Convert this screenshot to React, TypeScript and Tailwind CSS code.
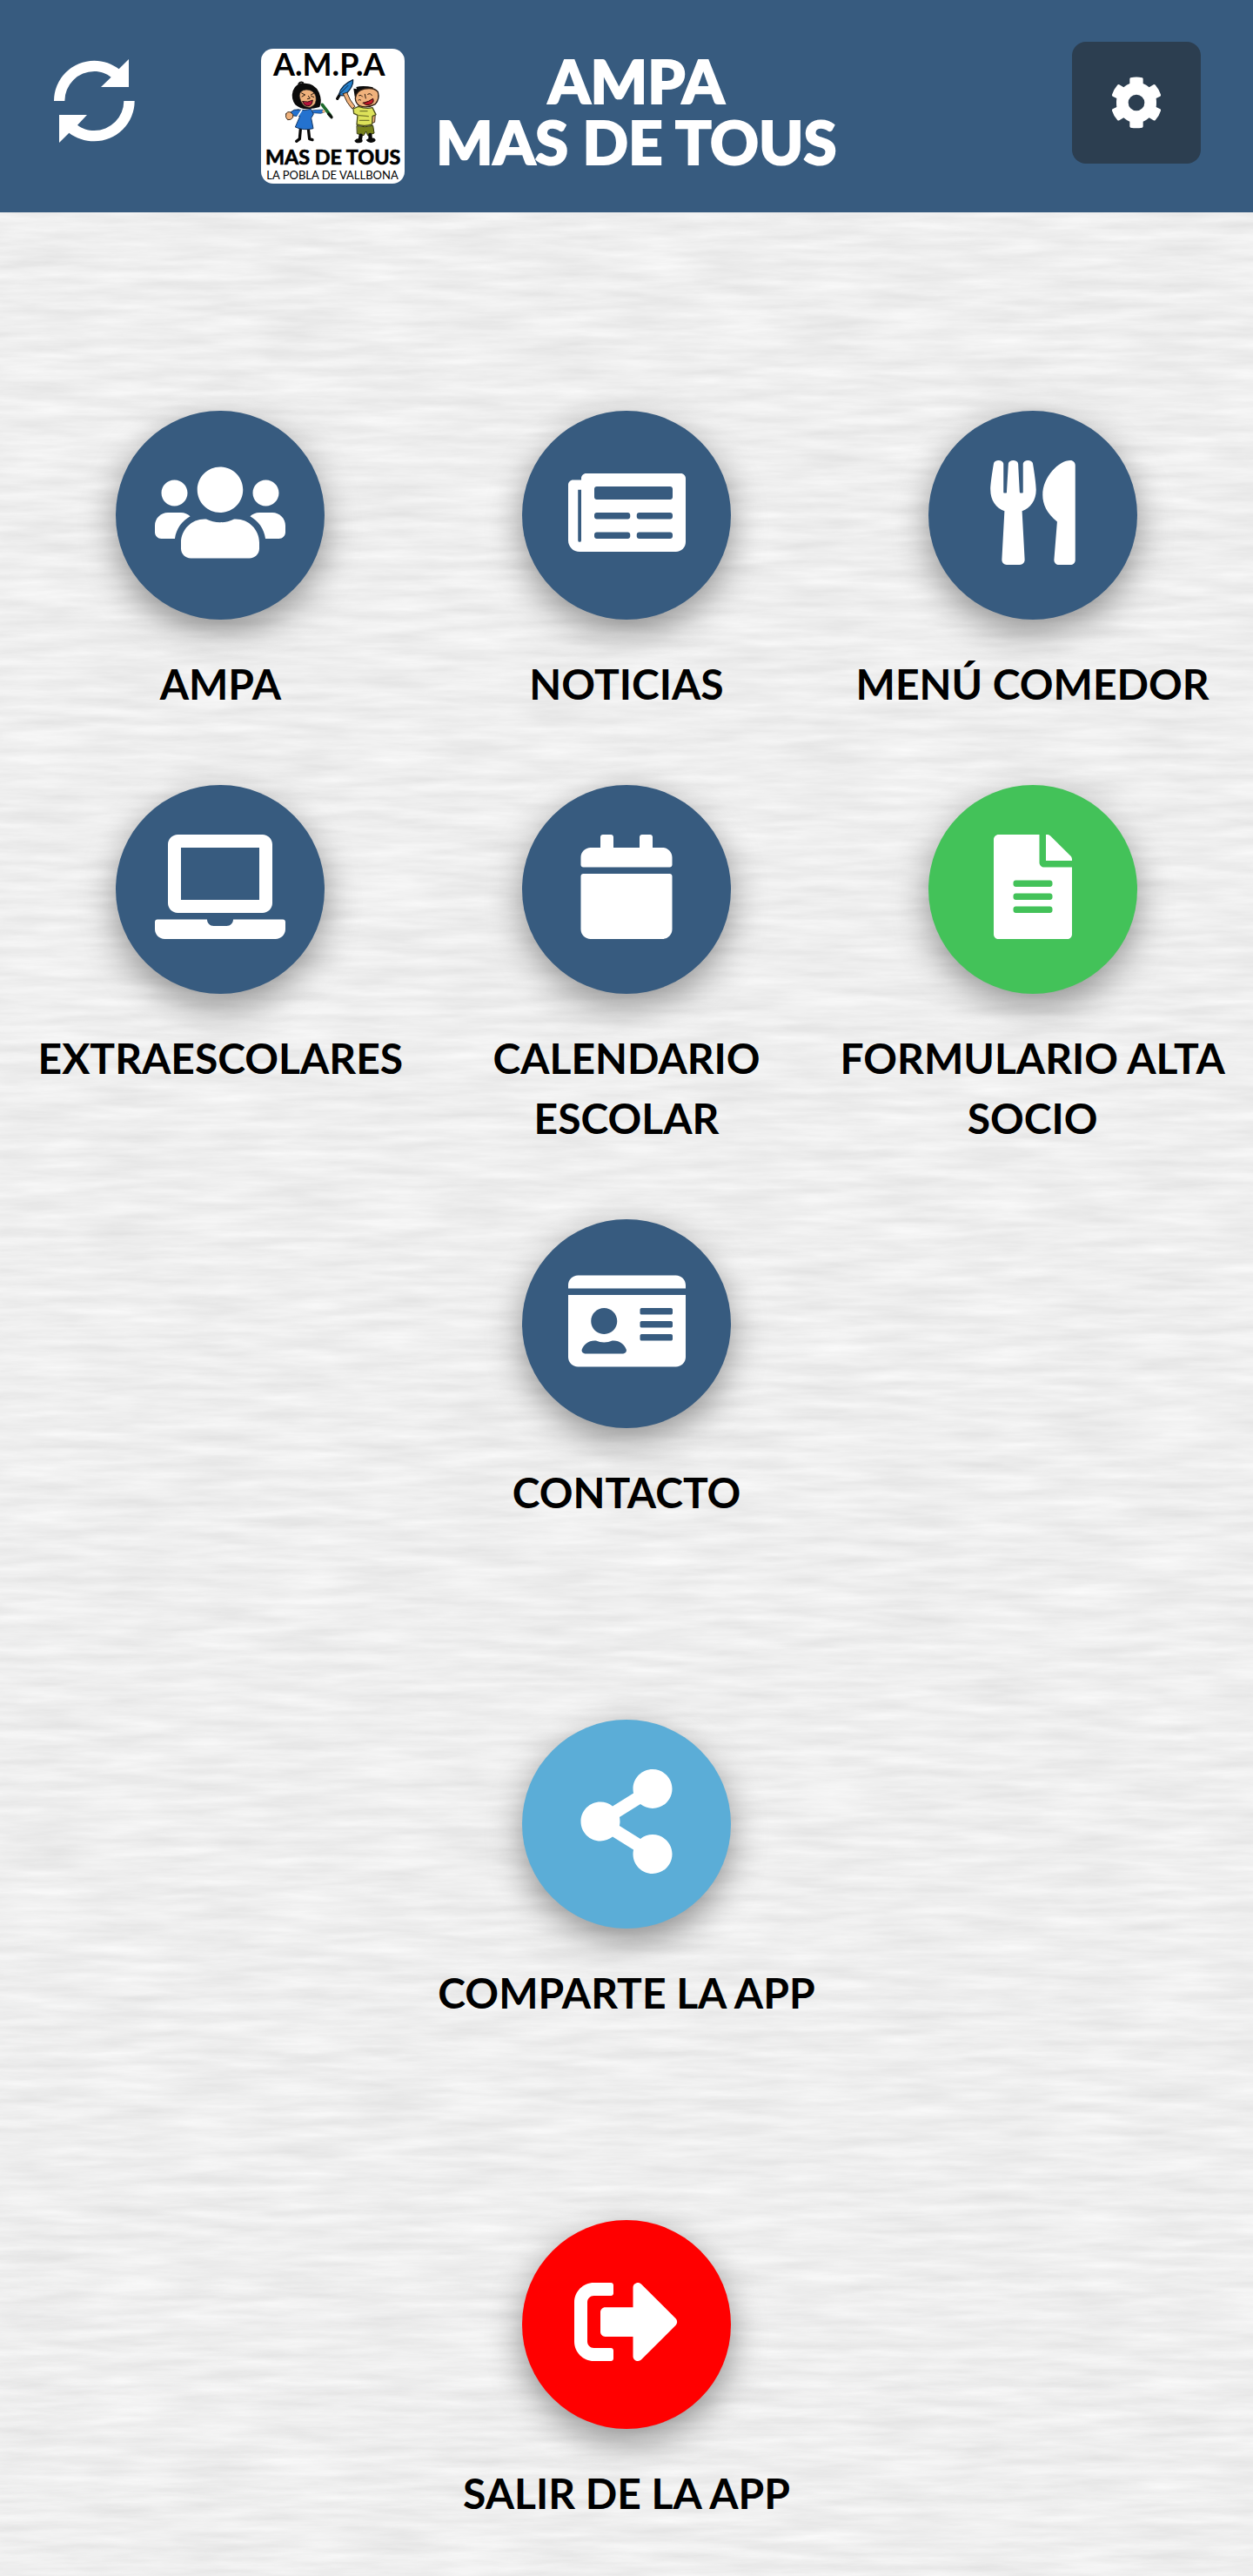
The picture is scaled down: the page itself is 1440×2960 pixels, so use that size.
import type { ReactNode } from 'react';
import {
	FaCalendar,
	FaFileAlt,
	FaIdCard,
	FaNewspaper,
	FaShareAlt,
	FaSignOutAlt,
	FaUsers,
	FaUtensils,
} from 'react-icons/fa';

interface TileProps {
	label: string;
	icon: ReactNode;
	href?: string;
	color?: string;
	onClick?: () => void;
}

// Laptop with a notched base, same 640x512 grid as the other icons
function LaptopIcon() {
	return (
		<svg viewBox="0 0 640 512" className="h-[120px] w-[150px]" fill="currentColor" aria-hidden="true">
			<path
				fillRule="evenodd"
				d="M112 0H528C554 0 576 22 576 48V336C576 362 554 384 528 384H112C86 384 64 362 64 336V48C64 22 86 0 112 0ZM128 64V320H512V64Z"
			/>
			<path d="M12 416H256C256 434 270 448 288 448H352C370 448 384 434 384 416H628C635 416 640 421 640 428V464C640 490 618 512 592 512H48C22 512 0 490 0 464V428C0 421 5 416 12 416Z" />
		</svg>
	);
}

function SyncIcon() {
	return (
		<svg viewBox="186 204 279 288" className="h-24 w-[93px]" fill="currentColor" aria-hidden="true">
			<path d="M186 348A139 139 0 0 1 325 209C357 209 387 220 410 238L444 204V300H348L383 266C367 253 347 246 325 246A102 102 0 0 0 223 348Z" />
			<path d="M464 348A139 139 0 0 1 325 487C293 487 262 476 238 458L204 492V396H300L267 431C283 443 303 450 325 450A102 102 0 0 0 427 348Z" />
		</svg>
	);
}

function GearIcon() {
	return (
		<svg viewBox="288 263 180 180" className="size-[60px]" fill="currentColor" aria-hidden="true">
			<path
				fillRule="evenodd"
				d="M358 267Q378 262 398 267Q401 268 401 271V287Q412 291 422 300L437 291Q441 289 444 293Q457 308 462 325Q463 329 460 331L446 338Q448 353 446 368L460 375Q463 377 462 381Q457 398 444 412Q441 416 437 414L422 405Q412 414 401 418V434Q401 438 398 439Q378 443 358 439Q355 438 355 434V418Q344 414 334 405L319 414Q315 416 312 412Q299 398 294 381Q293 377 296 375L310 368Q308 353 310 338L296 331Q293 329 294 325Q299 308 312 293Q315 289 319 291L334 300Q344 291 355 287V271Q355 268 358 267ZM378 325A28 28 0 1 0 378 381A28 28 0 1 0 378 325Z"
			/>
		</svg>
	);
}

// School badge: two kids holding a pencil and a brush
function Badge() {
	return (
		<svg viewBox="0 0 495 465" className="h-[155px] w-[165px] shrink-0 rounded-[14px] bg-white" role="img" aria-label="A.M.P.A Mas de Tous">
			<g fontFamily="Lato, sans-serif" textAnchor="middle" fill="#000">
				<text x="235" y="94" fontSize="108" fontWeight="700">A.M.P.A</text>
				<text x="248" y="400" fontSize="70" fontWeight="700" stroke="#000" strokeWidth="2">MAS DE TOUS</text>
				<text x="246" y="449" fontSize="39">LA POBLA DE VALLBONA</text>
			</g>

			{/* Girl */}
			<g strokeLinejoin="round" strokeLinecap="round" transform="translate(-30 -33)">
				<path d="M166 310L163 344L152 352M193 308L197 344L207 347" fill="none" stroke="#0a0a0a" strokeWidth="10" />
				<path d="M160 154Q166 146 174 150" fill="none" stroke="#111" strokeWidth="6" />
				<path d="M140 178Q150 150 182 152Q216 152 230 184Q242 214 232 234Q214 240 190 241Q166 242 148 226Q132 204 140 178Z" fill="#0b0b0b" />
				<path d="M162 196Q162 176 186 174Q212 174 219 198Q224 226 200 235Q170 238 162 196Z" fill="#f0b27c" stroke="#222" strokeWidth="2" />
				<path d="M170 186L182 192L171 198M202 192L213 186M203 196L212 200M193 196L199 204L190 206" fill="none" stroke="#2b1a10" strokeWidth="3" />
				<path d="M174 215Q192 220 208 210Q206 232 190 230Q177 228 174 215Z" fill="#b5123a" stroke="#2a0a10" strokeWidth="3" />
				<path d="M208 245L243 243L250 251L236 256L208 254Z" fill="#2472cf" stroke="#14345e" strokeWidth="2" />
				<path d="M158 243Q182 248 202 241L211 258L203 272L210 308Q176 316 148 303L164 266L142 264L132 252Q144 240 158 243Z" fill="#2472cf" stroke="#14345e" strokeWidth="3" />
				<path d="M170 245Q158 266 142 284" fill="none" stroke="#fff" strokeWidth="5" />
				<path d="M116 258Q120 248 132 252Q144 258 140 270Q132 280 122 278Q112 270 116 258Z" fill="#f0b27c" stroke="#3a2a1c" strokeWidth="3" />
				<path d="M241 226L269 263" fill="none" stroke="#1d6b2d" strokeWidth="11" />
				<path d="M263 258L273 269" fill="none" stroke="#0d140d" strokeWidth="10" />
				<circle cx="246" cy="249" r="5" fill="#f0b27c" />
			</g>

			{/* Boy */}
			<g strokeLinejoin="round" strokeLinecap="round" transform="translate(-30 -33)">
				<path d="M293 205L302 190" fill="none" stroke="#0c0c0c" strokeWidth="10" />
				<path d="M299 190Q306 158 347 140Q349 164 322 190Q308 199 299 190Z" fill="#247fcb" stroke="#0d2946" strokeWidth="4" />
				<path d="M302 188L330 160" fill="none" stroke="#0d2946" strokeWidth="3" />
				<path d="M313 188L326 184Q336 212 354 232L344 240Q326 222 313 188Z" fill="#f0b27c" stroke="#3a2a1c" strokeWidth="3" />
				<path d="M353 198L349 170L360 172L358 165Q382 158 416 166L416 178Q380 174 360 192Z" fill="#0b0b0b" />
				<path d="M355 204Q356 178 386 171Q420 165 433 182Q440 206 424 224Q396 240 370 230Q356 222 355 204Z" fill="#f0b27c" stroke="#2b1d13" strokeWidth="4" />
				<path d="M368 194Q376 190 380 198M398 190Q408 184 412 194M388 190L391 204M366 210Q370 206 374 210" fill="none" stroke="#2b1a10" strokeWidth="3" />
				<path d="M382 220Q402 216 416 205Q422 220 404 226Q390 230 382 220Z" fill="#c01828" stroke="#280808" strokeWidth="3" />
				<path d="M412 252L424 256L422 286L410 290Z" fill="#f0b27c" stroke="#3a2a1c" strokeWidth="3" />
				<path d="M348 240L366 232Q392 242 414 236L426 260L414 266L413 294Q386 302 360 294L363 262L350 256Z" fill="#dde25a" stroke="#4d4f1c" strokeWidth="4" />
				<path d="M372 248H396M368 263L400 266M370 280H402" fill="none" stroke="#77792b" strokeWidth="4" />
				<path d="M361 299Q388 306 416 298L420 324L398 332L392 318L384 332L362 326Z" fill="#77811c" stroke="#33370c" strokeWidth="3" />
				<path d="M374 332L372 344M406 330L407 342" fill="none" stroke="#0a0a0a" strokeWidth="13" />
				<path d="M352 350Q360 338 378 344Q384 354 372 357Q356 360 352 350ZM392 348Q400 338 420 341Q430 348 420 354Q402 362 392 348Z" fill="#0a0a0a" />
			</g>
		</svg>
	);
}

// Watercolour paper texture that fills the page behind the menu
function PaperBackground() {
	return (
		<svg className="absolute inset-0 -z-10 size-full" aria-hidden="true">
			<filter id="paper" x="0" y="0" width="100%" height="100%" colorInterpolationFilters="sRGB">
				<feTurbulence type="fractalNoise" baseFrequency="0.01 0.09" numOctaves="4" seed="8" />
				<feColorMatrix values="0.1 0 0 0 0.885  0.1 0 0 0 0.885  0.1 0 0 0 0.885  0 0 0 0 1" />
			</filter>
			<rect width="100%" height="100%" filter="url(#paper)" />
		</svg>
	);
}

function Tile({ label, icon, href, color = 'bg-[#375b7f]', onClick }: TileProps) {
	const content = (
		<>
			<span className={`flex size-60 items-center justify-center rounded-full pb-1.5 text-[120px] text-white shadow-[0_14px_40px_rgba(0,0,0,0.4)] ${color}`}>
				{icon}
			</span>
			<span className="mt-[39px] text-5xl leading-[69px] font-bold">{label}</span>
		</>
	);

	if (href) {
		return (
			<a href={href} className="flex w-1/3 flex-col items-center text-center">
				{content}
			</a>
		);
	}
	return (
		<button type="button" onClick={onClick} className="flex cursor-pointer flex-col items-center text-center">
			{content}
		</button>
	);
}

const menu: TileProps[] = [
	{ label: 'AMPA', href: '#ampa', icon: <FaUsers className="w-[150px]" /> },
	{ label: 'NOTICIAS', href: '#noticias', icon: <FaNewspaper className="w-[135px]" /> },
	{ label: 'MENÚ COMEDOR', href: '#menu-comedor', icon: <FaUtensils /> },
	{ label: 'EXTRAESCOLARES', href: '#extraescolares', icon: <LaptopIcon /> },
	{ label: 'CALENDARIO ESCOLAR', href: '#calendario', icon: <FaCalendar /> },
	{ label: 'FORMULARIO ALTA SOCIO', href: '#alta-socio', icon: <FaFileAlt />, color: 'bg-[#43c259]' },
	{ label: 'CONTACTO', href: '#contacto', icon: <FaIdCard className="w-[135px]" /> },
];

export default function App() {
	return (
		<div className="relative isolate min-h-screen bg-[#efefef] font-[Lato,sans-serif] text-black">
			<PaperBackground />

			<header className="flex items-start bg-[#375b7f] pt-12 pr-[60px] pb-8 pl-[62px] text-white">
				<button type="button" aria-label="Actualizar" className="mt-5 cursor-pointer">
					<SyncIcon />
				</button>
				<div className="mt-2 mr-auto ml-[145px] flex items-start gap-9 pb-px">
					<Badge />
					<h1 className="pt-0.5 text-center text-[69px] leading-[70px] font-black whitespace-nowrap [-webkit-text-stroke:2px_white]">
						<span className="block">AMPA</span>
						<span className="block">MAS DE TOUS</span>
					</h1>
				</div>
				<button type="button" aria-label="Ajustes" className="flex h-[140px] w-[148px] cursor-pointer items-center justify-center rounded-2xl bg-[#2c3e50]">
					<GearIcon />
				</button>
			</header>

			<main className="flex flex-col items-center px-5 pt-[228px] pb-[60px]">
				<nav className="flex w-full flex-wrap justify-center gap-y-[82px]">
					{menu.map((item) => (
						<Tile key={item.label} {...item} />
					))}
				</nav>
				<div className="mt-[227px] flex flex-col items-center gap-[227px]">
					<Tile label="COMPARTE LA APP" icon={<FaShareAlt />} color="bg-[#5badd7]" />
					<Tile label="SALIR DE LA APP" icon={<FaSignOutAlt />} color="bg-[#ff0000]" />
				</div>
			</main>
		</div>
	);
}
